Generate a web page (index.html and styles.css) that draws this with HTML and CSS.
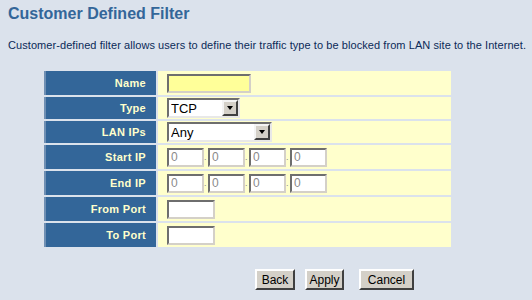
FILE: index.html
```html
<!DOCTYPE html>
<html lang="en">
<head>
    <meta charset="UTF-8">
    <title>Customer Defined Filter</title>
    <link rel="stylesheet" href="styles.css">
</head>
<body>
    <h1 class="page-title">Customer Defined Filter</h1>
    <p class="intro">Customer-defined filter allows users to define their traffic type to be blocked from LAN site to the Internet.</p>

    <form id="filterForm">
        <table class="filter-table">
            <tr>
                <th>Name</th>
                <td><input type="text" class="name-input" id="name"></td>
            </tr>
            <tr class="short-row">
                <th>Type</th>
                <td>
                    <span class="select-box type-select">
                        <select id="type">
                            <option>TCP</option>
                            <option>UDP</option>
                            <option>ICMP</option>
                        </select>
                    </span>
                </td>
            </tr>
            <tr class="short-row">
                <th>LAN IPs</th>
                <td>
                    <span class="select-box lan-select">
                        <select id="lanIps">
                            <option>Any</option>
                            <option>Single</option>
                            <option>Range</option>
                        </select>
                    </span>
                </td>
            </tr>
            <tr>
                <th>Start IP</th>
                <td class="ip-cell">
                    <input type="text" class="ip-input" value="0"><span class="dot">.</span><input type="text" class="ip-input" value="0"><span class="dot">.</span><input type="text" class="ip-input" value="0"><span class="dot">.</span><input type="text" class="ip-input" value="0">
                </td>
            </tr>
            <tr>
                <th>End IP</th>
                <td class="ip-cell">
                    <input type="text" class="ip-input" value="0"><span class="dot">.</span><input type="text" class="ip-input" value="0"><span class="dot">.</span><input type="text" class="ip-input" value="0"><span class="dot">.</span><input type="text" class="ip-input" value="0">
                </td>
            </tr>
            <tr>
                <th>From Port</th>
                <td><input type="text" class="port-input" id="fromPort"></td>
            </tr>
            <tr>
                <th>To Port</th>
                <td><input type="text" class="port-input" id="toPort"></td>
            </tr>
        </table>

        <div class="actions">
            <button type="button" class="btn btn-back">Back</button>
            <button type="submit" class="btn btn-apply">Apply</button>
            <button type="button" class="btn btn-cancel">Cancel</button>
        </div>
    </form>
</body>
</html>
```

FILE: styles.css
```css
body {
    margin: 0;
    padding: 6px 8px;
    background-color: #dbe2ec;
    font-family: "Liberation Sans", Arial, sans-serif;
    color: #0b2a58;
}

.page-title {
    margin: 0;
    font-size: 16px;
    font-weight: bold;
    color: #336699;
    line-height: 16px;
}

.intro {
    margin: 16px 0 17px 0;
    font-size: 11px;
    line-height: 14px;
    letter-spacing: 0.07px;
    white-space: nowrap;
}

/* Settings table */
.filter-table {
    margin-left: 34px;
    border-spacing: 2px;
    width: 411px;
}

.filter-table tr {
    height: 24px;
}

.filter-table tr.short-row {
    height: 22px;
}

.filter-table th {
    width: 100px;
    padding: 0 10px 0 0;
    text-align: right;
    background-color: #336699;
    border-left: 2px solid #6f8fb3;
    color: #ffffcc;
    font-size: 11px;
    font-weight: bold;
    letter-spacing: 0.3px;
}

.filter-table td {
    padding: 0 0 0 9px;
    background-color: #ffffcc;
    font-size: 11px;
    line-height: 0;
}

/* Inputs */
input[type="text"] {
    box-sizing: border-box;
    height: 19px;
    margin: 0;
    padding: 0 2px;
    border: 2px solid;
    border-color: #6e6e6e #d4d0c8 #d4d0c8 #6e6e6e;
    font-family: "Liberation Sans", Arial, sans-serif;
    font-size: 12px;
    vertical-align: middle;
    outline: none;
}

.name-input {
    width: 84px;
    background-color: #ffff99;
}

.ip-input {
    width: 37px;
    background-color: #fff;
    color: #8a8a8a;
}

.port-input {
    width: 48px;
    background-color: #fff;
}

.dot {
    display: inline-block;
    width: 4px;
    color: #8a8a8a;
    font-size: 9px;
    line-height: 19px;
    vertical-align: bottom;
}

/* Select with classic arrow button */
.select-box {
    position: relative;
    display: inline-block;
    box-sizing: border-box;
    height: 20px;
    border: 2px solid;
    border-color: #6e6e6e #e8e8e8 #e8e8e8 #6e6e6e;
    background-color: #fff;
    vertical-align: middle;
}

.type-select {
    width: 73px;
}

.lan-select {
    width: 105px;
}

.select-box select {
    appearance: none;
    -webkit-appearance: none;
    width: 100%;
    height: 16px;
    margin: 0;
    padding: 0 0 0 2px;
    border: none;
    background: transparent;
    font-family: "Liberation Sans", Arial, sans-serif;
    font-size: 13px;
    color: #000;
    outline: none;
}

.select-box::after {
    content: "";
    position: absolute;
    top: 0;
    right: 0;
    box-sizing: border-box;
    width: 16px;
    height: 16px;
    border: 2px solid;
    border-color: #f4f4f4 #404040 #404040 #f4f4f4;
    background-color: #d4d0c8;
    pointer-events: none;
}

.select-box::before {
    content: "";
    position: absolute;
    top: 6px;
    right: 5px;
    width: 0;
    height: 0;
    border-left: 3px solid transparent;
    border-right: 3px solid transparent;
    border-top: 4px solid #000;
    z-index: 1;
    pointer-events: none;
}

/* Buttons */
.actions {
    display: flex;
    gap: 10px;
    margin: 20px 0 0 247px;
}

.btn {
    box-sizing: border-box;
    height: 21px;
    padding: 0;
    border: 2px solid;
    border-color: #fff #404040 #404040 #fff;
    background-color: #d4d0c8;
    font-family: "Liberation Sans", Arial, sans-serif;
    font-size: 12px;
    color: #000;
    cursor: pointer;
}

.btn-back {
    width: 40px;
}

.btn-apply {
    width: 39px;
}

.btn-cancel {
    width: 55px;
    margin-left: 5px;
}
```
